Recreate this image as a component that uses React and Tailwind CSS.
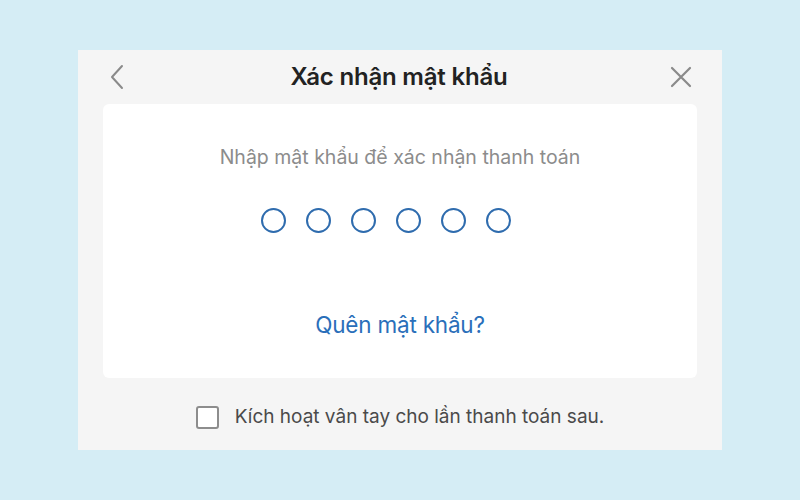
import { useState } from 'react'

function PinDots({ count = 6 }) {
  return (
    <div className="flex justify-center gap-5">
      {Array.from({ length: count }).map((_, i) => (
        <span key={i} className="block w-[25px] h-[25px] rounded-full border-2 border-[#2f6cae]" />
      ))}
    </div>
  )
}

export default function App() {
  const [fingerprint, setFingerprint] = useState(false)

  return (
    <div
      className="w-[800px] h-[500px] bg-[#d5edf5] pt-[50px] pl-[78px]"
      style={{ fontFamily: 'Inter, "Noto Sans", sans-serif' }}
    >
      <div className="w-[644px] h-[400px] bg-[#f5f5f5] flex flex-col">
        {/* Header */}
        <div className="h-[54px] flex items-center justify-between px-[30px]">
          <button className="text-[#8a8a8a]">
            <svg width="20" height="26" viewBox="0 0 20 26" fill="none">
              <path d="M14 2 L4 13 L14 24" stroke="currentColor" strokeWidth="2" strokeLinecap="round" strokeLinejoin="round" />
            </svg>
          </button>
          <h1 className="text-[24px] font-semibold text-[#222] tracking-[-0.2px]">Xác nhận mật khẩu</h1>
          <button className="text-[#8a8a8a]">
            <svg width="22" height="22" viewBox="0 0 22 22" fill="none">
              <path d="M2 2 L20 20 M20 2 L2 20" stroke="currentColor" strokeWidth="2.2" strokeLinecap="round" />
            </svg>
          </button>
        </div>

        {/* Card */}
        <div className="mx-[25px] h-[274px] bg-white rounded-md flex flex-col items-center">
          <p className="mt-[39px] text-[19.5px] text-[#8c8c8c]">Nhập mật khẩu để xác nhận thanh toán</p>
          <div className="mt-[36px] mr-[28px]">
            <PinDots />
          </div>
          <button className="mt-[75px] text-[22.5px] text-[#2a6fba] tracking-[-0.2px]">Quên mật khẩu?</button>
        </div>

        {/* Fingerprint option */}
        <label className="flex-1 flex items-center justify-center gap-[16px] cursor-pointer pt-[6px]">
          <span
            onClick={() => setFingerprint(!fingerprint)}
            className="w-[23px] h-[23px] rounded-[3px] border-2 border-[#8d8d8d] bg-white"
          />
          <span className="text-[19px] text-[#4a4a4a]">Kích hoạt vân tay cho lần thanh toán sau.</span>
        </label>
      </div>
    </div>
  )
}
